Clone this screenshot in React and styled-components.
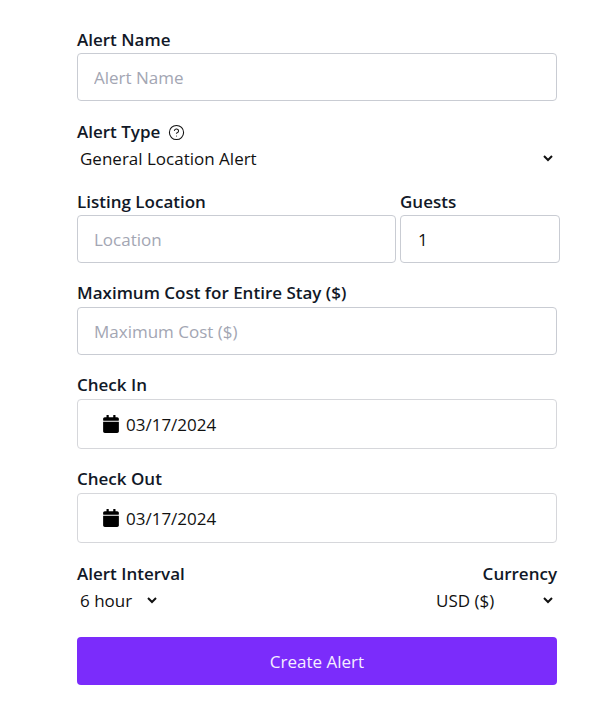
import React from "react";
import styled, { createGlobalStyle } from "styled-components";
import { CircleHelp } from "lucide-react";
import { FaCalendar } from "react-icons/fa";

const Global = createGlobalStyle`
  * { box-sizing: border-box; }
  html, body { margin: 0; padding: 0; background: #fff; }
  body { font-family: "Open Sans", "Noto Sans", "Liberation Sans", sans-serif; color: #111; }
`;

const Form = styled.form`
  width: 480px;
  margin-left: 77px;
  padding-top: 28px;
  display: flex;
  flex-direction: column;
`;

const Field = styled.div`
  display: flex;
  flex-direction: column;
  margin-bottom: ${(p) => p.$mb ?? 18}px;
`;

const Label = styled.label`
  display: flex;
  align-items: center;
  gap: 8px;
  height: 24px;
  margin-bottom: ${(p) => p.$gap ?? 1}px;
  font-size: 17px;
  font-weight: 600;
  line-height: 24px;
  color: #111827;
`;

const TextInput = styled.input`
  width: ${(p) => p.$w || "100%"};
  height: 48px;
  padding: 0 ${(p) => p.$pad ?? 16}px;
  border: 1px solid #c9ccd3;
  border-radius: 4px;
  background: #fff;
  font: 400 17px "Open Sans", "Noto Sans", sans-serif;
  color: #111;
  outline: none;
  &::placeholder { color: #a3a6b3; opacity: 1; }
`;

const Select = styled.select`
  height: 26px;
  width: ${(p) => p.$w || "calc(100% + 0px)"};
  margin: ${(p) => (p.$end ? "0 1px 0 0" : "0 0 0 -1px")};
  padding: 0;
  border: 0;
  background: #fff;
  font: 400 17px "Open Sans", "Noto Sans", sans-serif;
  color: #111;
  outline: none;
`;

const LocationRow = styled.div`
  display: flex;
  gap: 4px;
  width: 483px;
  margin-bottom: 18px;
`;

const DateBox = styled.div`
  height: 50px;
  display: flex;
  align-items: center;
  gap: 6px;
  padding-left: 24px;
  border: 1px solid #d6d7db;
  border-radius: 4px;
  font-size: 17px;
  color: #111;
`;

const Split = styled.div`
  display: flex;
  justify-content: space-between;
  margin-bottom: 24px;
`;

const Column = styled.div`
  display: flex;
  flex-direction: column;
  align-items: ${(p) => (p.$end ? "flex-end" : "flex-start")};
`;

const Submit = styled.button`
  width: 100%;
  height: 48px;
  border: 0;
  border-radius: 4px;
  background: #7b2cfb;
  color: #f5efff;
  font: 400 17px "Open Sans", "Noto Sans", sans-serif;
`;

const Dated = ({ label, value, mb }) => (
  <Field $mb={mb}>
    <Label $gap={2}>{label}</Label>
    <DateBox>
      <FaCalendar size={18} color="#000" />
      <span>{value}</span>
    </DateBox>
  </Field>
);

export default function App() {
  return (
    <>
      <Global />
      <Form onSubmit={(e) => e.preventDefault()}>
        <Field $mb={19}>
          <Label>Alert Name</Label>
          <TextInput placeholder="Alert Name" />
        </Field>
        <Field $mb={19}>
          <Label>
            Alert Type <CircleHelp size={17} strokeWidth={1.5} color="#111" />
          </Label>
          <Select defaultValue="g">
            <option value="g">General Location Alert</option>
          </Select>
        </Field>
        <LocationRow>
          <Field $mb={0}>
            <Label>Listing Location</Label>
            <TextInput $w="319px" placeholder="Location" />
          </Field>
          <Field $mb={0}>
            <Label>Guests</Label>
            <TextInput $w="160px" $pad={17} defaultValue="1" />
          </Field>
        </LocationRow>
        <Field>
          <Label $gap={2}>Maximum Cost for Entire Stay ($)</Label>
          <TextInput placeholder="Maximum Cost ($)" />
        </Field>
        <Dated label="Check In" value="03/17/2024" mb={18} />
        <Dated label="Check Out" value="03/17/2024" mb={19} />
        <Split>
          <Column>
            <Label>Alert Interval</Label>
            <Select $w="84px" defaultValue="6">
              <option value="6">6 hour</option>
            </Select>
          </Column>
          <Column $end>
            <Label>Currency</Label>
            <Select $end $w="124px" defaultValue="usd">
              <option value="usd">USD ($)</option>
            </Select>
          </Column>
        </Split>
        <Submit type="submit">Create Alert</Submit>
      </Form>
    </>
  );
}
